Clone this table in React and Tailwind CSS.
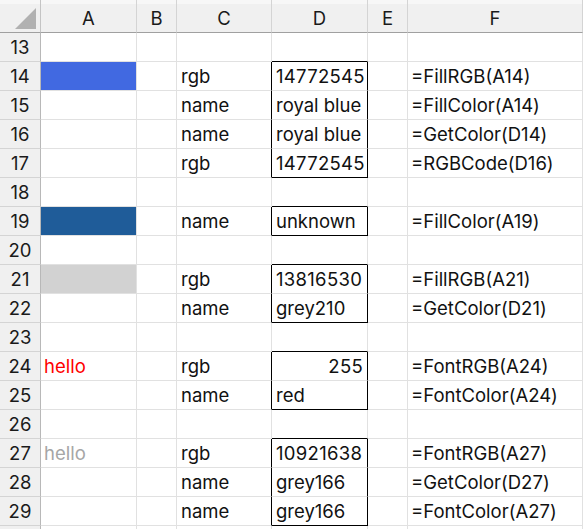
import React from "react";

const rows = [
  { n: 13 },
  { n: 14, a: { fill: "bg-[#4169e1]" }, c: "rgb", d: "14772545", f: "=FillRGB(A14)" },
  { n: 15, c: "name", d: "royal blue", f: "=FillColor(A14)" },
  { n: 16, c: "name", d: "royal blue", f: "=GetColor(D14)" },
  { n: 17, c: "rgb", d: "14772545", f: "=RGBCode(D16)" },
  { n: 18 },
  { n: 19, a: { fill: "bg-[#1f5c99]" }, c: "name", d: "unknown", f: "=FillColor(A19)" },
  { n: 20 },
  { n: 21, a: { fill: "bg-[#d2d2d2]" }, c: "rgb", d: "13816530", f: "=FillRGB(A21)" },
  { n: 22, c: "name", d: "grey210", f: "=GetColor(D21)" },
  { n: 23 },
  { n: 24, a: { text: "hello", color: "text-[#ff0000]" }, c: "rgb", d: "255", dRight: true, f: "=FontRGB(A24)" },
  { n: 25, c: "name", d: "red", f: "=FontColor(A24)" },
  { n: 26 },
  { n: 27, a: { text: "hello", color: "text-[#a6a6a6]" }, c: "rgb", d: "10921638", f: "=FontRGB(A27)" },
  { n: 28, c: "name", d: "grey166", f: "=GetColor(D27)" },
  { n: 29, c: "name", d: "grey166", f: "=FontColor(A27)" },
  { n: 30, hideNum: true },
];

const boxes = [
  [14, 17],
  [19, 19],
  [21, 22],
  [24, 25],
  [27, 29],
];
const inBox = (n) => boxes.some(([s, e]) => n >= s && n <= e);
const boxEnd = (n) => boxes.some(([s, e]) => n === e);
const beforeBox = (n) => boxes.some(([s]) => n === s - 1);
const isNum = (s) => typeof s === "string" && /^\d+$/.test(s);

function Cell({ children, className = "" }) {
  return (
    <div className={"flex items-center pt-[2px] overflow-hidden whitespace-nowrap border-r border-b " + className}>
      {children}
    </div>
  );
}

export default function App() {
  return (
    <div
      className="w-[583px] h-[529px] overflow-hidden bg-white text-[18.5px] text-[#111]"
      style={{ fontFamily: "Inter, 'Noto Sans', sans-serif" }}
    >
      <div className="grid grid-cols-[41px_96px_40px_95px_96px_40px_1fr] auto-rows-[29px] grid-rows-[33px]">
        {/* header */}
        <div className="relative bg-[#f0f0f0] border-r border-b border-r-[#c4c4c4] border-b-[#a0a0a0]">
          <div className="absolute left-0 right-0 top-0 h-[4px] bg-[#f7f7f7]" />
          <svg className="absolute left-[15px] top-[8px]" width="21" height="21" viewBox="0 0 21 21">
            <polygon points="0,21 21,21 21,0" fill="#b1b1b1" />
          </svg>
        </div>
        {["A", "B", "C", "D", "E", "F"].map((h) => (
          <div
            key={h}
            className="relative flex items-center justify-center pt-[5px] bg-[#f0f0f0] border-r border-b border-r-[#d4d4d4] border-b-[#a0a0a0] text-[#1a1a1a]"
          >
            <div className="absolute left-0 right-0 top-0 h-[4px] bg-[#f7f7f7]" />
            {h}
          </div>
        ))}
        {rows.map((r) => {
          const box = inBox(r.n);
          const dBottom = boxEnd(r.n) || beforeBox(r.n);
          return (
            <React.Fragment key={r.n}>
              <Cell className="justify-center bg-[#f0f0f0] border-r-[#b8b8b8] border-b-[#d4d4d4] text-[#1a1a1a]">
                {r.hideNum ? null : r.n}
              </Cell>
              <Cell className={"pl-[3px] border-r-[#e1e1e1] border-b-[#e1e1e1] " + (r.a && r.a.fill ? r.a.fill : "") + " " + (r.a && r.a.color ? r.a.color : "")}>
                {r.a && r.a.text}
              </Cell>
              <Cell className="border-r-[#e1e1e1] border-b-[#e1e1e1]"></Cell>
              <Cell className={"pl-[4px] border-b-[#e1e1e1] " + (box ? "border-r-black" : "border-r-[#e1e1e1]")}>
                {r.c}
              </Cell>
              <Cell
                className={
                  "px-[4px] " +
                  (box ? "border-r-black " : "border-r-[#e1e1e1] ") +
                  (dBottom ? "border-b-black " : "border-b-[#e1e1e1] ") +
                  (r.dRight ? "justify-end " : "") +
                  (isNum(r.d) ? "tracking-[0.3px]" : "")
                }
              >
                {r.d}
              </Cell>
              <Cell className="border-r-[#e1e1e1] border-b-[#e1e1e1]"></Cell>
              <Cell className="pl-[3px] border-r-[#e1e1e1] border-b-[#e1e1e1]">{r.f}</Cell>
            </React.Fragment>
          );
        })}
      </div>
    </div>
  );
}
